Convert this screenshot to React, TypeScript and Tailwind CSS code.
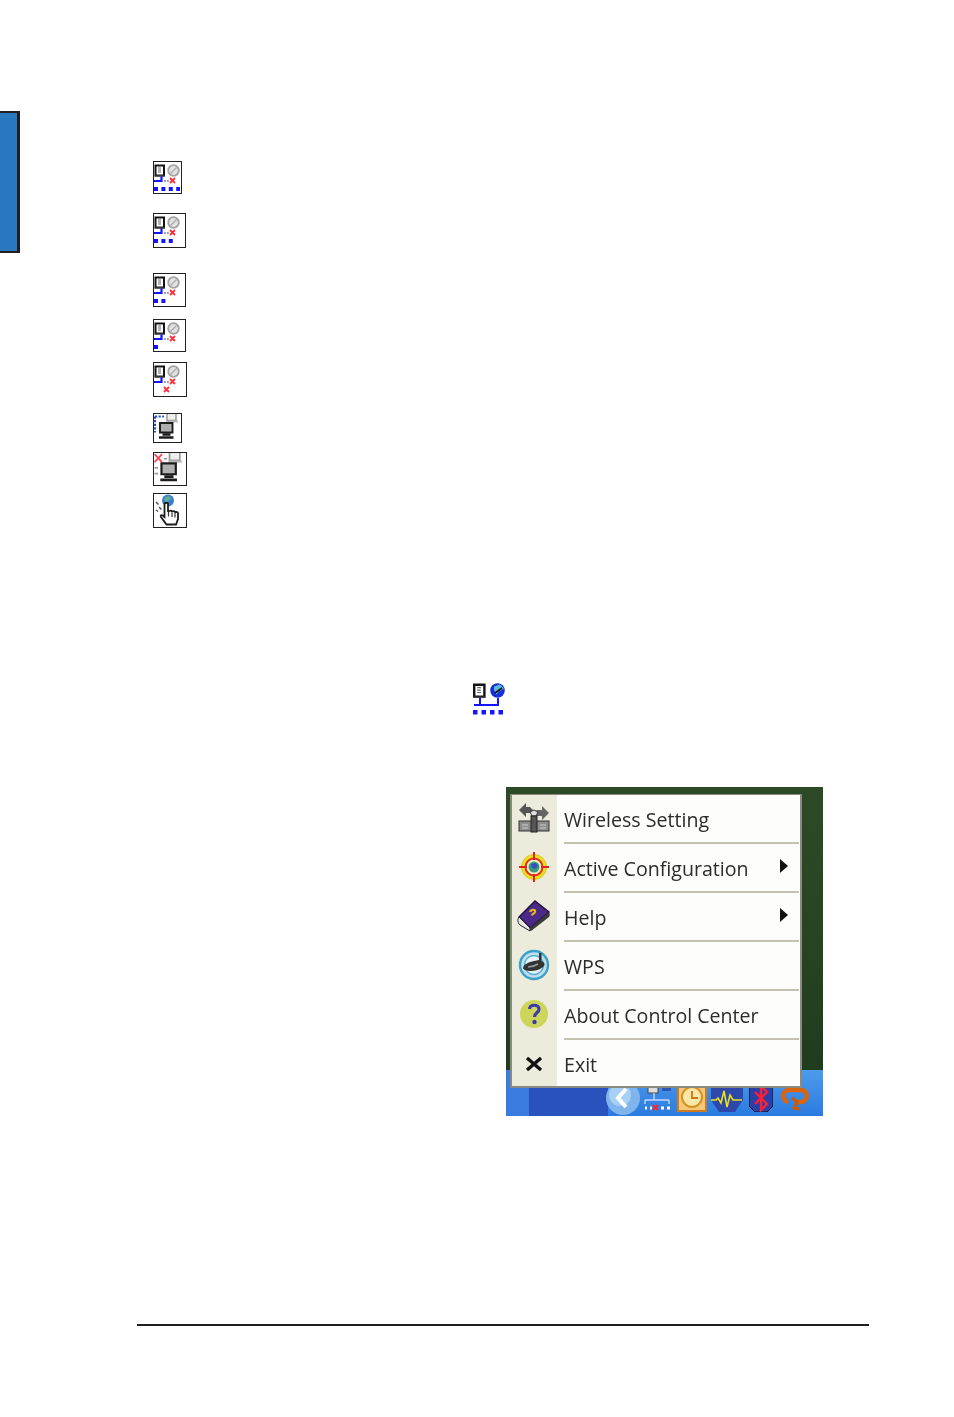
import { FC, ReactNode } from "react";

const blue = "#1414ff";

const DocIcon: FC<{ x?: number; y?: number; s?: number }> = ({ x = 0, y = 0, s = 1 }) => (
  <g transform={`translate(${x} ${y}) scale(${s})`}>
    <path d="M1 1h8.500v10h-8.500z" fill="#fff" stroke="#141414" strokeWidth="2" />
    <path d="M0 11.500h10" stroke="#444" strokeWidth="1.200" />
    <path d="M3.500 3.500h3M3.500 5.500h3M3.500 7.500h3" stroke="#666" strokeWidth="1" />
  </g>
);

// the little status icons, all the same picture with a different number of bars
const BandIcon: FC<{ w: number; h: number; dots: number; extraX?: boolean }> = ({ w, h, dots, extraX }) => (
  <div className="border-[1.5px] border-[#222] bg-white overflow-hidden" style={{ width: w, height: h }}>
    <svg width={w - 3} height={h - 3} className="blur-[0.35px]">
      <DocIcon x={0.500} y={2.500} />
      <circle cx={19.500} cy={8.500} r={5.300} fill="#e2e2e2" stroke="#a4a4a4" strokeWidth="1.800" />
      <path d="M16.500 11.500l6-6" stroke="#aaa" strokeWidth="1.300" />
      <path d="M7.500 14.500v4.500H0" fill="none" stroke={blue} strokeWidth="2.200" />
      <path d="M10 19h1.800M13 19h1.800" stroke="#777" strokeWidth="1.500" />
      <path d="M16 16l5 5M21 16l-5 5" stroke="#ff3040" strokeWidth="1.900" />
      {[0, 1, 2, 3].slice(0, dots).map((i) => (
        <rect key={i} x={i * 7.400} y={25} width={4} height={4} fill={blue} />
      ))}
      {extraX && <path d="M10 24l5 5M15 24l-5 5" stroke="#ff3040" strokeWidth="1.900" />}
    </svg>
  </div>
);

const PcIcon: FC<{ w: number; h: number; crossed?: boolean }> = ({ w, h, crossed }) => (
  <div className="border-[1.5px] border-[#222] bg-white overflow-hidden" style={{ width: w, height: h }}>
    <svg width={w - 3} height={h - 3} viewBox="0 0 26 27" className="blur-[0.35px]">
      <path d="M13 -1h9v7.500h-9z" fill="#eee" stroke="#999" strokeWidth="1.500" />
      <path d="M12 7.500h12" stroke="#bbb" strokeWidth="1.800" />
      <path d="M6 9h12.500v9.500H6z" fill="#b0b0b0" stroke="#1c1c1c" strokeWidth="1.900" />
      <path d="M8.500 20.500h8M5 23.500h14.500" stroke="#1c1c1c" strokeWidth="2.400" />
      {crossed ? (
        <>
          <path d="M0 1l6.500 7M6.500 1L0 8" stroke="#ff4050" strokeWidth="1.500" />
          <path d="M0 13h3M0 18h3M8 5h3" stroke="#999" strokeWidth="1.500" />
        </>
      ) : (
        <path d="M1 2.500h9M1 2.500v16" stroke="#2a4fc0" strokeWidth="2.200" strokeDasharray="2.200 1.400" fill="none" />
      )}
    </svg>
  </div>
);

const GlobeHandIcon: FC = () => (
  <div className="w-[34px] h-[35px] border-[1.5px] border-[#222] bg-white overflow-hidden">
    <svg width={31} height={32} viewBox="0 0 31 32" className="blur-[0.35px]">
      <circle cx={14} cy={6.500} r={6} fill="#3d7fc8" />
      <path d="M10.500 3.500l4.500-1.500 2.500 3-3.500 2-1 3.500-2.500-3.500z" fill="#5cb09a" />
      <path d="M2 8l2.500 2.500M5 13l2.500 2.500M2 16l2 1.500" stroke="#555" strokeWidth="1.500" />
      <path
        d="M10.500 9.500c1-1 3-1 3.500 0v7.500l1 0c1.500-.5 2.500-.5 3 .5 1.500-.5 2.500-.5 3 .5 1.500-.3 3 0 3 1.500v5.500l-2 5.500H12.500l-5.500-7.500c-.8-1.500.5-2.500 1.800-1.500l1.700 1.500z"
        fill="#fff"
        stroke="#1c1c1c"
        strokeWidth="1.800"
      />
      <path d="M14.500 18v4.500M18 18.500v4.500M21 19v4.500" stroke="#333" strokeWidth="1.200" />
    </svg>
  </div>
);

const WirelessIcon = () => (
  <svg width={34} height={34} viewBox="0 0 34 34">
    <path d="M2 9l7-7v4h4l3 3-3 3H9v4z" fill="#555" />
    <path d="M32 12l-7-7v4h-5l-3 3 3 3h5v4z" fill="#666" />
    <path d="M13 11l4-2 4 2-2 4h-4z" fill="#ddd" stroke="#333" />
    <rect x={2} y={20} width={30} height={10} fill="#8d8d8d" stroke="#333" />
    <rect x={14} y={15} width={6} height={16} fill="#555" stroke="#222" />
    <path d="M5 24h6M23 24h6M5 27h6M23 27h6" stroke="#ccc" />
  </svg>
);

const TargetIcon = () => (
  <svg width={32} height={32} viewBox="0 0 32 32">
    <circle cx={16} cy={16} r={12.500} fill="#e8e020" stroke="#d8c820" />
    <circle cx={16} cy={16} r={8.500} fill="#f4f0c0" stroke="#e03020" strokeWidth="2" />
    <circle cx={16} cy={16} r={5.500} fill="#3a9a80" />
    <path d="M13 13l5-1 2 3-3 3-3-1z" fill="#3050c0" />
    <path d="M16 1v8M16 23v8M1 16h8M23 16h8" stroke="#e02020" strokeWidth="2" />
  </svg>
);

const BookIcon = () => (
  <svg width={34} height={32} viewBox="0 0 34 32">
    <path d="M2 17L18 1l14 11L13 28z" fill="#4a2a86" stroke="#221040" strokeWidth="1.400" />
    <path d="M2 17c-2 3-1 6 1 8l10 6v-3z" fill="#e8e8e8" stroke="#222" />
    <path d="M13 28L32 12c1 2 1 3 0 5L14 31l-1 0z" fill="#3a3a3a" />
    <path d="M13 12c1-3 6-3 5 0-.5 2-3 1.500-3 3.500" fill="none" stroke="#e8b820" strokeWidth="2.200" />
  </svg>
);

const WpsIcon = () => (
  <svg width={32} height={32} viewBox="0 0 32 32">
    <circle cx={16} cy={16} r={14} fill="#bfe0ee" stroke="#3ca0c8" strokeWidth="2.400" />
    <circle cx={16} cy={16} r={9.500} fill="#e6f3f8" stroke="#56b0d0" strokeWidth="1.500" />
    <path d="M5 19c1-4 6-6 11-7l5-1V4h2.500v8c2 1 3.500 2 3 4-1 3-8 6-13 6-5 0-8-1-8.500-3z" fill="#333" />
    <path d="M10 18c3 0 7-1 10-3" stroke="#999" strokeWidth="1.600" fill="none" />
  </svg>
);

const QuestionIcon = () => (
  <svg width={30} height={30} viewBox="0 0 30 30">
    <circle cx={15} cy={15} r={14} fill="#cdd65a" />
    <path d="M10.500 10c.5-5 9.500-5 9.500 0 0 4-4.500 3.500-4.500 8" fill="none" stroke="#3a3aa8" strokeWidth="3.200" />
    <circle cx={15.500} cy={23} r={2.200} fill="#3a3aa8" />
  </svg>
);

const ExitIcon = () => (
  <svg width={18} height={14} viewBox="0 0 18 14">
    <path d="M2 1l14 12M16 1L2 13" stroke="#111" strokeWidth="3.400" />
  </svg>
);

const MenuRow: FC<{ icon: ReactNode; label: string; arrow?: boolean; last?: boolean }> = ({ icon, label, arrow, last }) => (
  <div className={`flex shrink-0 ${last ? "h-[46px]" : "h-[49px]"}`}>
    <div className={`w-[45px] shrink-0 bg-[#ecebdc] flex items-center justify-center pr-[1px] blur-[0.4px] ${last ? "pt-[1px]" : "pb-[3px]"}`}>{icon}</div>
    <div className={`flex-1 flex items-center justify-between ml-[7px] mr-[1px] ${last ? "pt-[4px]" : "pt-[2px] border-b-2 border-[#c4c2ae]"}`}>
      <span className="text-[19.6px] leading-none text-[#2c2c2c] blur-[0.35px] font-['Open_Sans',sans-serif]">{label}</span>
      {arrow && <span className="w-0 h-0 mr-[11px] mb-[6px] border-y-[7px] border-y-transparent border-l-[8px] border-l-[#111]" />}
    </div>
  </div>
);

// icons in the notification area, the menu hides their top part
const Tray = () => (
  <div className="absolute inset-0 flex items-start pl-[99px] pt-[12px] blur-[0.5px]">
    <svg width={36} height={36} viewBox="0 0 36 36" className="-mt-[2px] shrink-0">
      <circle cx={18} cy={18} r={17} fill="#7fb4ec" />
      <circle cx={15} cy={15} r={11} fill="#a8d0f4" />
      <path d="M21 9l-8 9 8 9" fill="none" stroke="#fff" strokeWidth="4" />
    </svg>
    <svg width={30} height={30} viewBox="0 0 30 30" className="ml-[3px] shrink-0">
      <rect x={4} y={3} width={10} height={8} fill="#ddd" stroke="#444" />
      <rect x={18} y={3} width={9} height={6} fill="#3055b0" />
      <path d="M1 18h24M10 11v7M1 18v4M25 18v4" stroke="#c8d4ff" strokeWidth="1.400" fill="none" />
      <path d="M9 23l5 5M14 23l-5 5" stroke="#ff2233" strokeWidth="1.800" />
      <path d="M1 26h2M6 26h2M17 26h3M23 26h3" stroke="#fff" strokeWidth="3" />
    </svg>
    <svg width={30} height={30} viewBox="0 0 30 30" className="ml-[3px] shrink-0">
      <rect x={1} y={0} width={28} height={29} fill="#f3c878" stroke="#d07a20" strokeWidth="2" />
      <circle cx={15} cy={15} r={10} fill="#fbe8a8" stroke="#d89020" strokeWidth="2" />
      <path d="M15 9v7h6" fill="none" stroke="#c87818" strokeWidth="1.800" />
    </svg>
    <svg width={32} height={30} viewBox="0 0 32 30" className="ml-[4px] shrink-0">
      <path d="M0 4h32v14l-8 12H8L0 18z" fill="#2d48a8" />
      <path d="M0 18h5l2-2 3 5 3-12 3 16 3-12 3 5h9" fill="none" stroke="#e8e020" strokeWidth="1.600" />
    </svg>
    <svg width={24} height={30} viewBox="0 0 24 30" className="ml-[6px] shrink-0">
      <path d="M0 0h24v24l-6 6H6l-6-6z" fill="#2a3fa8" stroke="#111" />
      <path d="M6 10l12 12-6 6V4l6 6L6 22" fill="none" stroke="#ff2030" strokeWidth="2.400" />
    </svg>
    <svg width={30} height={24} viewBox="0 0 30 24" className="ml-[7px] mt-[5px] shrink-0">
      <path d="M8 15C1 13 2 3 9 3h12c7 0 8 10 1 12h-6" fill="none" stroke="#d8640e" strokeWidth="4.600" />
      <path d="M12 11l5 4-3 6 6 1" fill="none" stroke="#c85a08" strokeWidth="3" />
    </svg>
  </div>
);

const ContextMenuShot = () => (
  <div className="relative ml-[506px] w-[317px] h-[329px] flex flex-col">
    <div className="h-[283px] bg-gradient-to-b from-[#2c4a26] via-[#274522] to-[#1f3d1d]" />
    <div className="relative h-[46px] flex">
      <div className="w-[23px] bg-[#3a7be0]" />
      <div className="w-[79px] bg-[#2a52bd]" />
      <div className="flex-1 bg-gradient-to-b from-[#4d9bec] to-[#2a7be0]" />
      <Tray />
    </div>
    <div className="absolute left-[4px] top-[7px] w-[292px] h-[294px] bg-[#fdfdfb] border-2 border-t-[1px] border-[#8b8a80] flex flex-col">
      <MenuRow icon={<WirelessIcon />} label="Wireless Setting" />
      <MenuRow icon={<TargetIcon />} label="Active Configuration" arrow />
      <MenuRow icon={<BookIcon />} label="Help" arrow />
      <MenuRow icon={<WpsIcon />} label="WPS" />
      <MenuRow icon={<QuestionIcon />} label="About Control Center" />
      <MenuRow icon={<ExitIcon />} label="Exit" last />
    </div>
  </div>
);

const App: FC = () => {
  return (
    <div className="w-[954px] h-[1417px] bg-white overflow-hidden flex flex-col">
      <div className="flex items-start">
        <div className="mt-[111px] w-[20px] h-[142px] bg-[#2878c0] border-y-[2px] border-r-[3px] border-[#231f20]" />
        <div className="ml-[133px] mt-[161px] flex flex-col items-start">
          <BandIcon w={29} h={33} dots={4} />
          <div className="mt-[19px]"><BandIcon w={33} h={35} dots={3} /></div>
          <div className="mt-[25px]"><BandIcon w={33} h={34} dots={2} /></div>
          <div className="mt-[12px]"><BandIcon w={33} h={33} dots={1} /></div>
          <div className="mt-[10px]"><BandIcon w={34} h={35} dots={0} extraX /></div>
          <div className="mt-[16px]"><PcIcon w={29} h={30} /></div>
          <div className="mt-[9px]"><PcIcon w={34} h={34} crossed /></div>
          <div className="mt-[7px]"><GlobeHandIcon /></div>
        </div>
      </div>
      <div className="ml-[472px] mt-[155px] w-[33px] h-[32px]">
        <svg width={33} height={32} viewBox="0 0 33 32" className="blur-[0.35px]">
          <DocIcon x={1} y={0.500} s={1.200} />
          <circle cx={25.500} cy={7.500} r={7.300} fill="#1530d8" />
          <path d="M22 3.500l6-2 4 4-5 3-2.500 3-2.500-4.500z" fill="#5fb8d8" />
          <path d="M23 10l7-5" stroke="#111" strokeWidth="1.600" />
          <path d="M8 14.500v7.500M26 15v7M2 22h25" stroke={blue} strokeWidth="2" fill="none" />
          {[1, 9.500, 18, 26.500].map((x) => (
            <rect key={x} x={x} y={27} width={4.500} height={4.500} fill={blue} />
          ))}
        </svg>
      </div>
      <div className="mt-[72px]">
        <ContextMenuShot />
      </div>
      <div className="ml-[137px] mt-[208px] w-[732px] h-[2px] bg-[#231f20]" />
    </div>
  );
};

export default App;
